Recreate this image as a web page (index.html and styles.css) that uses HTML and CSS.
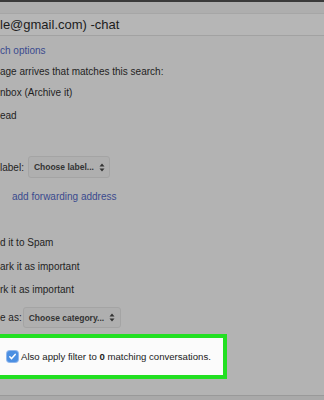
FILE: index.html
```html
<!DOCTYPE html>
<html>
<head>
<meta charset="utf-8">
<link rel="stylesheet" href="styles.css">
</head>
<body>
<div class="screen">
  <div class="topbar"></div>
  <div class="band"></div>
  <div class="search">le@gmail.com) -chat</div>
  <div class="content">
    <div class="row r-options"><a class="link">ch options</a></div>
    <div class="row r-1">age arrives that matches this search:</div>
    <div class="row r-1">nbox (Archive it)</div>
    <div class="row r-3">ead</div>
    <div class="row r-label">label:
      <span class="select">Choose label...
        <svg class="arrows" width="6" height="9" viewBox="0 0 6 9"><path d="M3 0.5 L5.5 3.5 L0.5 3.5 Z M3 8.5 L5.5 5.5 L0.5 5.5 Z" fill="#333"/></svg>
      </span>
    </div>
    <div class="row r-fwd"><a class="link">add forwarding address</a></div>
    <div class="row r-spam">d it to Spam</div>
    <div class="row r-4">ark it as important</div>
    <div class="row r-3">rk it as important</div>
    <div class="row r-cat">e as:
      <span class="select">Choose category...
        <svg class="arrows" width="6" height="9" viewBox="0 0 6 9"><path d="M3 0.5 L5.5 3.5 L0.5 3.5 Z M3 8.5 L5.5 5.5 L0.5 5.5 Z" fill="#333"/></svg>
      </span>
    </div>
    <div class="highlight">
      <span class="checkbox"><svg width="9" height="9" viewBox="0 0 9 9"><path d="M1.8 4.8 L3.6 6.6 L7.2 2.4" fill="none" stroke="#fff" stroke-width="1.5" stroke-linecap="round" stroke-linejoin="round"/></svg></span>
      <span class="cbtext">Also apply filter to <b>0</b> matching conversations.</span>
    </div>
  </div>
  <div class="footer-gap"></div>
  <div class="footer"></div>
</div>
</body>
</html>
```

FILE: styles.css
```css
html, body {
  margin: 0;
  padding: 0;
  background: #b2b2b2;
}
.screen {
  width: 324px;
  height: 400px;
  overflow: hidden;
  display: flex;
  flex-direction: column;
  font-family: "Liberation Sans", Arial, sans-serif;
  color: #1f1f1f;
  background: #b3b3b3;
}
.topbar {
  height: 2px;
  background: #3a3a3a;
  flex: none;
}
.band {
  height: 11px;
  background: #aeaeae;
  flex: none;
}
.search {
  flex: none;
  height: 21px;
  border-top: 1px solid #a6a6a6;
  border-bottom: 1px solid #a2a2a2;
  background: #b6b6b6;
  font-size: 13px;
  line-height: 22px;
  color: #1c1c1c;
  white-space: nowrap;
}
.content {
  display: flex;
  flex-direction: column;
  flex: none;
}
.row {
  height: 20px;
  display: flex;
  align-items: center;
  font-size: 10px;
  white-space: nowrap;
}
.link {
  color: #3a4a8e;
}
.r-options { margin-top: 4px; }
.r-1 { margin-top: 1px; }
.r-3 { margin-top: 3px; }
.r-4 { margin-top: 4px; }
.r-label { margin-top: 31px; height: 22px; }
.r-fwd { margin-top: 8px; padding-left: 12px; }
.r-spam { margin-top: 26px; }
.r-cat { margin-top: 8px; height: 21px; }
.select {
  display: inline-flex;
  align-items: center;
  gap: 5px;
  height: 20px;
  margin-left: 4px;
  padding: 0 5px 0 5px;
  box-sizing: border-box;
  border: 1px solid #a4a4a4;
  border-radius: 3px;
  background: #afafaf;
  font-size: 8.5px;
  font-weight: bold;
  color: #333;
}
.r-label .select { width: 82px; height: 22px; }
.r-cat .select { width: 98px; height: 21px; margin-left: 1px; }
.arrows { flex: none; }
.highlight {
  margin-top: 6px;
  margin-left: -6px;
  width: 233px;
  height: 45px;
  box-sizing: border-box;
  border: 4px solid #22e022;
  background: #fbfbfb;
  display: flex;
  align-items: center;
  padding-left: 9px;
  gap: 3px;
  font-size: 9.6px;
  color: #222;
  white-space: nowrap;
}
.checkbox {
  width: 11px;
  height: 11px;
  border-radius: 3px;
  background: #4b8fe2;
  box-shadow: 0 0 0 1px #8fb6ec;
  display: flex;
  align-items: center;
  justify-content: center;
  flex: none;
}
.checkbox svg { display: block; }
.footer-gap {
  flex: 1;
}
.footer {
  flex: none;
  height: 4px;
  border-top: 1px solid #999;
  background: #a9a9a9;
}
```
